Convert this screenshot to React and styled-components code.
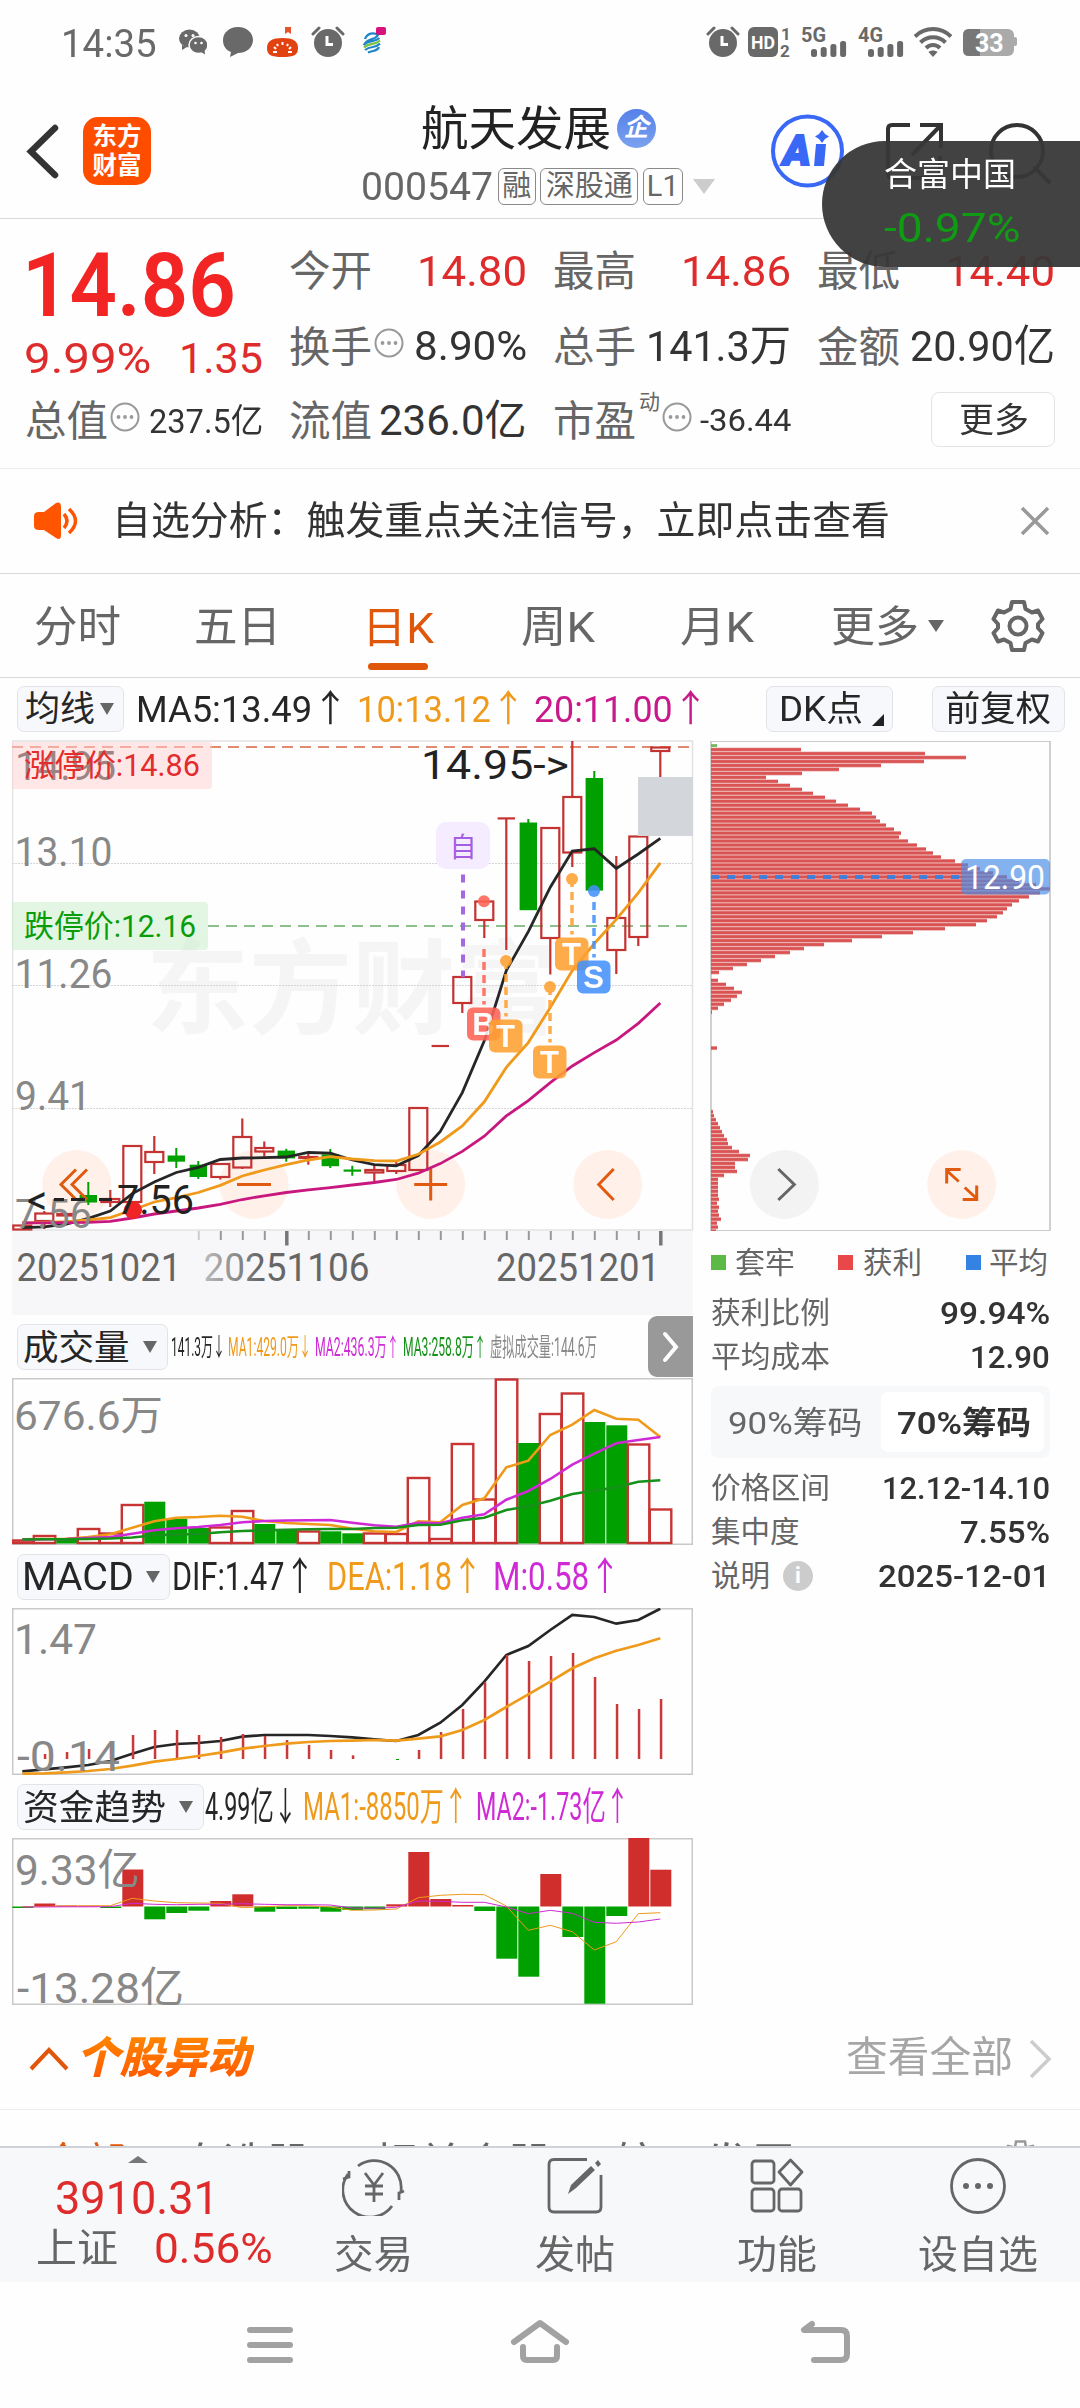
import { useLayoutEffect, useRef, useState } from 'react';
import styled, { createGlobalStyle } from 'styled-components';

const RED = '#de2b2b';
const GREEN = '#00a000';
const ORANGE = '#ef9a1a';
const BRAND = '#e0560a';
const PURPLE = '#cf2ad6';
const FONT = "Roboto, 'Noto Sans CJK SC', sans-serif";

const GlobalStyle = createGlobalStyle`
  * {
    box-sizing: border-box;
  }

  body {
    margin: 0;
    background: #fefefe;
    font-family: ${FONT};
    color: #333;
  }

  svg {
    display: block;
    flex: none;
  }
`;

/* ---------- text that always takes the same width ---------- */

const FitBox = styled.span`
  display: block;
  flex: none;
  width: ${(p) => p.$w}px;
  margin-left: ${(p) => p.$ml || 0}px;
  padding-top: ${(p) => p.$drop ?? 2.5}px;
  font-size: ${(p) => p.$size}px;
  line-height: 1.25;
  font-weight: ${(p) => p.$weight || 400};
  color: ${(p) => p.$color || 'inherit'};
  white-space: nowrap;

  span {
    display: inline-block;
    transform-origin: left center;
  }
`;

const Fit = ({ w, size, color, weight, ml, drop, children }) => {
  const ref = useRef(null);
  const [scale, setScale] = useState(1);

  useLayoutEffect(() => {
    setScale(w / ref.current.offsetWidth);
  }, [w]);

  return (
    <FitBox $w={w} $size={size} $color={color} $weight={weight} $ml={ml} $drop={drop}>
      <span ref={ref} style={{ transform: `scaleX(${scale})` }}>
        {children}
      </span>
    </FitBox>
  );
};

/* ---------- shared bits ---------- */

const Page = styled.main`
  width: 1080px;
  height: 2408px;
  overflow: hidden;
  display: flex;
  flex-direction: column;
  position: relative;
`;

const Row = styled.div`
  display: flex;
  align-items: center;
  flex: none;
  height: ${(p) => (p.$h ? `${p.$h}px` : 'auto')};
`;

const Spacer = styled.div`
  flex: none;
  width: ${(p) => p.$w}px;
`;

const DropButton = styled.button`
  display: flex;
  align-items: center;
  flex: none;
  width: ${(p) => p.$w}px;
  height: 46px;
  padding: 0 0 0 ${(p) => p.$pad || 5}px;
  margin: 0;
  border: 1.5px solid #e2e4ea;
  border-radius: 7px;
  background: #f7f8fb;
  color: #262626;
  font-family: inherit;
  text-align: left;
`;

const Caret = styled.i`
  flex: none;
  margin-left: ${(p) => p.$ml || 0}px;
  border-left: ${(p) => p.$s || 7}px solid transparent;
  border-right: ${(p) => p.$s || 7}px solid transparent;
  border-top: ${(p) => p.$h || 12}px solid ${(p) => p.$color || '#666'};
`;

const DotsIcon = styled.svg`
  margin: -6px 0 0 2px;
`;

const MoreDots = () => (
  <DotsIcon width="30" height="30" viewBox="0 0 30 30">
    <circle cx="15" cy="15" r="13.5" fill="none" stroke="#999" strokeWidth="2" />
    <circle cx="8.5" cy="15" r="1.9" fill="#999" />
    <circle cx="15" cy="15" r="1.9" fill="#999" />
    <circle cx="21.5" cy="15" r="1.9" fill="#999" />
  </DotsIcon>
);

/* ---------- status bar ---------- */

const StatusBar = styled(Row)`
  height: 88px;
  padding: 0 0 4px 61px;
  color: #696969;
`;

const AlarmIcon = () => (
  <svg width="34" height="32" viewBox="0 0 34 32">
    <circle cx="17" cy="17" r="14" fill="#696969" />
    <path d="M2 8 L8 2 M32 8 L26 2" stroke="#696969" strokeWidth="3" strokeLinecap="round" />
    <path d="M16 10 V18.5 H22" fill="none" stroke="#fff" strokeWidth="3" />
  </svg>
);

const Signal = ({ label }) => (
  <svg width="48" height="32" viewBox="0 0 48 32">
    <text x="0" y="16" fontSize="21" fontWeight="700" fill="#696969" textLength="25" lengthAdjust="spacingAndGlyphs">
      {label}
    </text>
    {[8, 10, 13, 16].map((h, i) => (
      <rect key={h} x={10 + i * 9.7} y={31 - h} width="6" height={h} rx="2.5" fill="#696969" />
    ))}
  </svg>
);

const Status = () => (
  <StatusBar>
    <Fit w={96} size={38} drop={5}>
      14:35
    </Fit>
    <Spacer $w={22} />
    <svg width="28" height="26" viewBox="0 0 28 26">
      <ellipse cx="10.5" cy="9.5" rx="10.5" ry="9" fill="#696969" />
      <path d="M3 16 L3 21 L8 18 Z" fill="#696969" />
      <ellipse cx="19.5" cy="16" rx="9.5" ry="8.5" fill="#696969" stroke="#fefefe" strokeWidth="1.5" />
      <path d="M22 23 L26 25.5 L25.5 20 Z" fill="#696969" />
      <circle cx="7" cy="6.5" r="1.5" fill="#fff" />
      <circle cx="14" cy="6.5" r="1.5" fill="#fff" />
      <circle cx="16.5" cy="14" r="1.3" fill="#fff" />
      <circle cx="22.5" cy="14" r="1.3" fill="#fff" />
    </svg>
    <Spacer $w={15} />
    <svg width="32" height="32" viewBox="0 0 32 32">
      <path d="M16 1 C25 1 31 7 31 14 C31 21 25 27 16 27 L8 31 L9 26 C4 24 1 20 1 14 C1 7 7 1 16 1 Z" fill="#696969" />
    </svg>
    <Spacer $w={13} />
    <svg width="31" height="32" viewBox="0 0 31 32">
      <path d="M18 1 H24 V8 L21 6 L18 8 Z" fill="#e8542a" />
      <path d="M0 22 C0 15 5 12 15.5 12 C26 12 31 15 31 22 C31 29 27 31 15.5 31 C4 31 0 29 0 22 Z" fill="#e2420f" />
      <path
        d="M15.5 16 V19 M10 18 L11 20 M21 18 L20 20 M7 21 L9 23 M24 21 L22 23 M6 26 H10 M25 26 H21"
        stroke="#fff"
        strokeWidth="2"
      />
    </svg>
    <Spacer $w={13} />
    <AlarmIcon />
    <Spacer $w={17} />
    <svg width="26" height="32" viewBox="0 0 26 32">
      <g fill="none" strokeWidth="2.2">
        <path d="M3 13 C5 7 12 6 16 9 C13 14 8 12 3 17" stroke="#1f86c8" />
        <path d="M1.5 19 C7 13 12 17 17.5 12" stroke="#1f86c8" />
        <path d="M2 21.5 C8 15.500 12 20 18 14.500" stroke="#7ac143" />
        <path d="M3 24 C9 19 13 23 18 17.5 M6 26.500 C11 24 15 26 17 21" stroke="#1f86c8" />
      </g>
      <rect x="14" y="1" width="10" height="8" rx="2" fill="#d6127c" />
    </svg>
    <Spacer $w={318} />
    <AlarmIcon />
    <Spacer $w={8} />
    <svg width="44" height="32" viewBox="0 0 44 32">
      <rect x="0" y="1" width="30" height="30" rx="6" fill="#696969" />
      <text x="3" y="23" fontSize="19" fontWeight="700" fill="#fff" textLength="24" lengthAdjust="spacingAndGlyphs">
        HD
      </text>
      <text x="33" y="14" fontSize="17" fontWeight="700" fill="#696969">
        1
      </text>
      <text x="32" y="31" fontSize="17" fontWeight="700" fill="#696969">
        2
      </text>
    </svg>
    <Spacer $w={9} />
    <Signal label="5G" />
    <Spacer $w={9} />
    <Signal label="4G" />
    <Spacer $w={8} />
    <svg width="38" height="32" viewBox="0 0 38 32" fill="none" stroke="#696969" strokeWidth="4">
      <path d="M1 10.5 C11 0.5 27 0.5 37 10.5" />
      <path d="M6.5 16.5 C13.5 9.5 24.5 9.5 31.5 16.5" />
      <path d="M12 22 C16 18 22 18 26 22" />
      <path d="M14.5 26 L19 31 L23.5 26 C21 24 17 24 14.5 26 Z" fill="#696969" stroke="none" />
    </svg>
    <Spacer $w={11} />
    <svg width="55" height="30" viewBox="0 0 55 30">
      <rect x="50" y="10" width="4" height="9" rx="2" fill="#aaa" />
      <rect x="0" y="2" width="51" height="27" rx="6" fill="#aaa" />
      <path d="M17 2 H6 Q0 2 0 8 V23 Q0 29 6 29 H17 Z" fill="#777" />
      <text x="12" y="24.5" fontSize="25" fontWeight="700" fill="#fff">
        33
      </text>
    </svg>
  </StatusBar>
);

/* ---------- header ---------- */

const HeaderBar = styled.header`
  display: flex;
  flex: none;
  height: 131px;
  border-bottom: 1.5px solid #d8d8d8;
`;

const HeaderSide = styled.div`
  display: flex;
  align-items: flex-start;
  flex: none;
  width: ${(p) => p.$w}px;
  padding: ${(p) => p.$pad};
`;

const Logo = styled.div`
  width: 68px;
  height: 68px;
  margin: 0 0 0 22px;
  padding-top: 5px;
  border-radius: 15px;
  background: #ff4d00;
  color: #fff;
  font-size: 24.5px;
  line-height: 29px;
  font-weight: 700;
  text-align: center;
`;

const TitleBlock = styled.div`
  display: flex;
  flex-direction: column;
  align-items: center;
  flex: none;
  width: 354px;
  padding-top: 12px;
`;

const Company = styled.span`
  width: 39px;
  height: 39px;
  margin-left: 6px;
  border-radius: 50%;
  background: linear-gradient(#5580e8, #7ba2f0);
  color: #fff;
  font-size: 25px;
  line-height: 38px;
  font-weight: 700;
  font-style: italic;
  text-align: center;
`;

const Tag = styled.span`
  width: ${(p) => p.$w}px;
  height: 37px;
  margin-left: 4.5px;
  border: 1.5px solid #8a8a8a;
  border-radius: 6px;
  color: #666;
  font-size: 29px;
  line-height: 35px;
  text-align: center;
  white-space: nowrap;
`;

const CodeRow = styled(Row)`
  height: 58px;
  padding-top: 3px;
`;

const Header = () => (
  <HeaderBar>
    <HeaderSide $w={361} $pad="29px 0 0 25px">
      <svg width="36" height="68" viewBox="0 0 36 68">
        <path d="M30 11 L6 34.5 L30 58" fill="none" stroke="#333" strokeWidth="6.5" strokeLinecap="round" />
      </svg>
      <Logo>
        东方
        <br />
        财富
      </Logo>
    </HeaderSide>
    <TitleBlock>
      <Row $h={56}>
        <Fit w={190} size={47} color="#222">
          航天发展
        </Fit>
        <Company>企</Company>
      </Row>
      <CodeRow>
        <Fit w={132} size={38} color="#666">
          000547
        </Fit>
        <Tag $w={38}>融</Tag>
        <Tag $w={98}>深股通</Tag>
        <Tag $w={40}>L1</Tag>
        <Caret $ml={10} $s={11} $h={15} $color="#ccc" />
      </CodeRow>
    </TitleBlock>
    <HeaderSide $w={365} $pad="25px 0 0 54px">
      <svg width="78" height="78" viewBox="0 0 78 78">
        <circle cx="38.5" cy="38" r="34.5" fill="none" stroke="#3968f6" strokeWidth="4" />
        <text x="14" y="52" fontSize="42" fontWeight="900" fontStyle="italic" fill="#3968f6" stroke="#3968f6" strokeWidth="2">
          A
        </text>
        <path d="M47 31 L57 31 L55 53 L45 53 Z M53 17 L56 21 L60 23.5 L56 26 L53 30 L50 26 L46 23.5 L50 21 Z" fill="#3968f6" />
      </svg>
      <Spacer $w={35} />
      <svg width="70" height="78" viewBox="0 0 70 78" fill="none" stroke="#333" strokeWidth="4">
        <path d="M28 12 H10 Q6 12 6 16 V61 Q6 65 10 65 H54 Q58 65 58 61 V43" />
        <path d="M38 12 H59 V35 M59 12 L30 42" />
      </svg>
      <Spacer $w={34} />
      <svg width="76" height="78" viewBox="0 0 76 78" fill="none" stroke="#333" strokeWidth="4">
        <circle cx="31" cy="38" r="26" />
        <path d="M49 55 L63 69" strokeLinecap="round" />
      </svg>
    </HeaderSide>
  </HeaderBar>
);

/* floating pill over the header and the quote */
const FloatPill = styled.aside`
  position: absolute;
  top: 141px;
  right: 0;
  width: 258px;
  height: 126px;
  padding: 12px 0 0 62px;
  border-radius: 63px 0 0 63px;
  background: rgba(56, 56, 56, 0.95);
`;

const PillLine = styled.div`
  display: flex;
  align-items: center;
  height: ${(p) => p.$h}px;
`;

/* ---------- quote ---------- */

const QuoteGrid = styled.section`
  display: grid;
  flex: none;
  grid-template-columns: repeat(4, 238px);
  grid-template-rows: 79px 72px 98px;
  column-gap: 26px;
  height: 250px;
  padding: 12px 0 0 25px;
  border-bottom: 1.5px solid #ebebeb;
`;

const PriceCell = styled.div`
  grid-row: 1 / 3;
  padding-top: 1px;
`;

const Cell = styled.div`
  display: flex;
  align-items: center;
  justify-content: space-between;
  padding-bottom: ${(p) => p.$pb || 0}px;
`;

const CellLabel = styled.div`
  display: flex;
  align-items: center;
  color: #666;
`;

const Super = styled.span`
  margin: -36px 0 0 3px;
  font-size: 21px;
  line-height: 24px;
`;

const MoreButton = styled.button`
  display: flex;
  align-items: center;
  justify-content: center;
  width: 124px;
  height: 55px;
  margin: 0 0 0 auto;
  border: 1.5px solid #e4e4e4;
  border-radius: 8px;
  background: #fff;
  color: #333;
  font-family: inherit;
`;

const QuoteCell = ({ label, value, w, size = 43, color = '#333', dots, sup, pb }) => (
  <Cell $pb={pb}>
    <CellLabel>
      <Fit w={83} size={41.5} drop={3}>
        {label}
      </Fit>
      {sup && <Super>{sup}</Super>}
      {dots && <MoreDots />}
    </CellLabel>
    <Fit w={w} size={size} color={color}>
      {value}
    </Fit>
  </Cell>
);

const Quote = () => (
  <QuoteGrid>
    <PriceCell>
      <Row $h={107}>
        <Fit w={214} size={89} color="#f22424" weight={600} ml={-3} drop={0}>
          14.86
        </Fit>
      </Row>
      <Row $h={38}>
        <Fit w={127} size={43} color={RED} ml={-1}>
          9.99%
        </Fit>
        <Fit w={84} size={43} color={RED} ml={28}>
          1.35
        </Fit>
      </Row>
    </PriceCell>
    <QuoteCell label="今开" value="14.80" w={110} color={RED} />
    <QuoteCell label="最高" value="14.86" w={110} color={RED} />
    <QuoteCell label="最低" value="14.40" w={110} color={RED} />
    <QuoteCell label="换手" value="8.90%" w={113} size={40} dots />
    <QuoteCell label="总手" value="141.3万" w={145} />
    <QuoteCell label="金额" value="20.90亿" w={145} />
    <QuoteCell label="总值" value="237.5亿" w={114} size={34} dots pb={22} />
    <QuoteCell label="流值" value="236.0亿" w={148} size={42} pb={22} />
    <QuoteCell label="市盈" sup="动" value="-36.44" w={91} size={31} dots pb={22} />
    <Cell $pb={24}>
      <MoreButton>
        <Fit w={70} size={34}>
          更多
        </Fit>
      </MoreButton>
    </Cell>
  </QuoteGrid>
);

/* ---------- notice ---------- */

const NoticeBar = styled(Row)`
  height: 105px;
  padding-left: 34px;
  border-bottom: 1.5px solid #d8d8d8;
`;

const Notice = () => (
  <NoticeBar>
    <svg width="46" height="40" viewBox="0 0 46 40">
      <path d="M0 15 Q0 11 5 11 H10 L22 2 Q27 0 27 6 V34 Q27 40 22 37 L10 29 H5 Q0 29 0 25 Z" fill="#ff5500" />
      <path d="M30 13 Q36 20 30 27 M35 8 Q48 20 35 32" fill="none" stroke="#ff5500" strokeWidth="3.5" />
    </svg>
    <Fit w={778} size={39} ml={31.5} drop={1}>
      自选分析：触发重点关注信号，立即点击查看
    </Fit>
    <Spacer $w={130} />
    <svg width="30" height="30" viewBox="0 0 30 30">
      <path d="M2 2 L28 28 M28 2 L2 28" stroke="#999" strokeWidth="3.5" />
    </svg>
  </NoticeBar>
);

/* ---------- period tabs ---------- */

const TabBar = styled.nav`
  display: flex;
  align-items: center;
  flex: none;
  height: 104px;
  border-bottom: 1.5px solid #d8d8d8;
`;

const Tab = styled.div`
  display: flex;
  flex-direction: column;
  align-items: center;
  justify-content: center;
  flex: none;
  height: 100px;
  margin-left: ${(p) => p.$ml}px;
  padding-top: ${(p) => (p.$active ? 9 : 0)}px;
  color: ${(p) => (p.$active ? BRAND : '#666')};

  &::after {
    content: '';
    display: ${(p) => (p.$active ? 'block' : 'none')};
    width: 60px;
    height: 7px;
    margin: 7px 0 -7px;
    border-radius: 4px;
    background: ${BRAND};
  }
`;

const tabs = [
  { name: '分时', w: 87, ml: 34 },
  { name: '五日', w: 87, ml: 73 },
  { name: '日K', w: 72, ml: 81, active: true },
  { name: '周K', w: 74, ml: 87 },
  { name: '月K', w: 74, ml: 85 },
  { name: '更多', w: 88, ml: 77 },
];

const Tabs = () => (
  <TabBar>
    {tabs.map((t) => (
      <Tab key={t.name} $ml={t.ml} $active={t.active}>
        <Fit w={t.w} size={43} drop={5}>
          {t.name}
        </Fit>
      </Tab>
    ))}
    <Caret $ml={9} $s={8} $h={12} />
    <Spacer $w={47} />
    <svg width="54" height="54" viewBox="0 0 54 54" fill="none" stroke="#666" strokeWidth="4">
      <path
        d="M21 3 H33 L34.5 10 L41 13.500 L47 11.500 L51.5 20 L47 25 V29 L51.5 34 L47 42.500 L41 40.500 L34.500 44 L33 51 H21 L19.500 44 L13 40.500 L7 42.500 L2.500 34 L7 29 V25 L2.500 20 L7 11.500 L13 13.500 L19.500 10 Z"
        strokeLinejoin="round"
      />
      <circle cx="27" cy="27" r="8.5" />
    </svg>
  </TabBar>
);

/* ---------- average line bar ---------- */

const LineBar = styled(Row)`
  height: 62px;
  padding: 0 0 0 17px;
`;

const Corner = styled.i`
  align-self: flex-end;
  margin: 0 0 5px 9px;
  border-left: 12px solid transparent;
  border-bottom: 12px solid #222;
`;

const Averages = () => (
  <LineBar>
    <DropButton $w={107} $pad={7}>
      <Fit w={70} size={35}>
        均线
      </Fit>
      <Caret $ml={5} />
    </DropButton>
    <Fit w={212} size={37} color="#262626" ml={12}>
      MA5:13.49↑
    </Fit>
    <Fit w={168} size={37} color={ORANGE} ml={9}>
      10:13.12↑
    </Fit>
    <Fit w={174} size={37} color="#c8188a" ml={9}>
      20:11.00↑
    </Fit>
    <Spacer $w={58} />
    <DropButton $w={127} $pad={12}>
      <Fit w={84} size={35}>
        DK点
      </Fit>
      <Corner />
    </DropButton>
    <Spacer $w={39} />
    <DropButton $w={133} $pad={12}>
      <Fit w={106} size={35}>
        前复权
      </Fit>
    </DropButton>
  </LineBar>
);

/* ---------- charts ---------- */

const PITCH = 22;
const cx = (i) => 22.3 + PITCH * i;
const toPoints = (ys) => ys.map((y, i) => `${cx(i)},${y}`).join(' ');

// [kind, bodyTop, bodyBottom, high, low]
const candles = [
  ['r', 1225.5, 1229.5, 1225, 1230],
  ['r', 1213.5, 1221, 1211, 1229],
  ['r', 1214, 1215.5, 1213, 1217],
  ['g', 1195, 1202.5, 1182, 1205],
  ['r', 1199, 1202, 1190, 1207],
  ['r', 1146, 1202, 1146, 1202],
  ['r', 1152, 1162, 1136, 1174],
  ['g', 1155.5, 1161.7, 1148, 1168],
  ['g', 1164.7, 1177, 1161, 1179],
  ['r', 1164, 1177, 1163, 1179.5],
  ['r', 1137, 1167.5, 1118.5, 1169],
  ['r', 1148, 1151.5, 1141.4, 1156.6],
  ['g', 1150.6, 1158.4, 1148.8, 1161.7],
  ['r', 1157, 1158, 1153, 1164.7],
  ['g', 1154.3, 1166.2, 1149, 1168],
  ['g', 1169.5, 1171.7, 1165.8, 1175.8],
  ['r', 1170, 1172.5, 1165, 1183],
  ['r', 1165, 1171, 1162, 1174],
  ['r', 1108, 1170, 1108, 1170],
  ['f', 1046, 1046, 1046, 1046],
  ['r', 977, 1003, 977, 1013],
  ['r', 901.5, 920, 901.5, 938],
  ['f', 818.4, 818.4, 818.4, 950],
  ['g', 822.5, 910.2, 819, 910],
  ['r', 828, 938, 828, 974.5],
  ['r', 797, 852.5, 741, 867],
  ['g', 778, 890.6, 771, 890],
  ['r', 918, 950, 856, 974],
  ['r', 836.5, 937, 836.5, 946],
  ['r', 747.5, 751, 747.5, 777],
];

const ma5 = [
  1227.6, 1226.9, 1224, 1218.3, 1211, 1193.6, 1182, 1172.5, 1167.3, 1159.5, 1158, 1157.7, 1157, 1152.5, 1153.2,
  1160, 1164.7, 1165.8, 1155.5, 1131.4, 1092.6, 1040.8, 970.5, 931.6, 887.2, 851, 848.8, 868.4, 854, 838.4,
];
const ma10 = [
  1223, 1222.4, 1221.7, 1220, 1217.6, 1210, 1202, 1197.6, 1192.5, 1185.4, 1176, 1170, 1164.7, 1160, 1156.6,
  1159, 1160.6, 1161, 1154.3, 1142, 1126, 1101.8, 1067.4, 1042.6, 1007.5, 970.5, 943.5, 919.4, 892.8, 862.8,
];
const ma20 = [
  1222.8, 1222.8, 1222.6, 1222.4, 1221.3, 1218, 1214, 1211, 1208, 1204.3, 1199.5, 1195.8, 1192.5, 1189.9, 1187.6,
  1185, 1182.5, 1179.5, 1173.2, 1163.6, 1151.4, 1136.2, 1115.9, 1100.7, 1082.6, 1066, 1052.6, 1040, 1023.4, 1003,
];

const Candle = ({ i, data }) => {
  const [kind, top, bottom, high, low] = data;
  const x = cx(i);
  if (kind === 'g') {
    return (
      <g fill={GREEN}>
        <rect x={x - 1} y={high} width="2" height={low - high} />
        <rect x={x - 8.7} y={top} width="17.4" height={bottom - top} />
      </g>
    );
  }
  return (
    <g fill="none" stroke="#c33331" strokeWidth="2.2">
      <path d={`M${x} ${high} V${top} M${x} ${bottom} V${low}`} />
      {kind === 'f' ? (
        <path d={`M${x - 8.7} ${top} H${x + 8.7}`} />
      ) : (
        <rect x={x - 9} y={top} width="18" height={bottom - top} />
      )}
    </g>
  );
};

const Marker = ({ x, y, top, from, letter, color }) => (
  <g opacity="0.88">
    <path d={`M${x} ${from} V${top - 3}`} stroke={color} strokeWidth="3.5" strokeDasharray="8 5" />
    <circle cx={x} cy={y} r="6" fill={color} />
    <rect x={x - 17} y={top} width="33.5" height="33" rx="6" fill={color} />
    <text
      x={x - 0.5}
      y={top + 27.5}
      fontSize="31"
      fontWeight="700"
      fill="#fff"
      textAnchor="middle"
      fontFamily="'Liberation Sans', sans-serif"
    >
      {letter}
    </text>
  </g>
);

const Label = ({ x, y, w, size = 40, color = '#888', children }) => (
  <text x={x} y={y} fontSize={size} fill={color} textLength={w} lengthAdjust="spacingAndGlyphs">
    {children}
  </text>
);

const Control = ({ x, d, bg = '#fff0e8', color = '#e05a10' }) => (
  <g>
    <circle cx={x} cy="1184.5" r="34.5" fill={bg} opacity="0.9" />
    <path transform={`translate(${x} 1184.5)`} d={d} fill="none" stroke={color} strokeWidth="3" />
  </g>
);

const KChart = () => (
  <svg width="682" height="491" viewBox="12 740 682 491">
    <text x="146" y="1026" fontSize="103" fontWeight="700" fill="#f5f5f5">
      东方财富
    </text>
    <rect x="12.5" y="741" width="680" height="489" fill="none" stroke="#e2e2e2" strokeWidth="1.5" />
    {[863.5, 985.5, 1108.5].map((y) => (
      <path key={y} d={`M12 ${y} H692`} stroke="#d5d5d5" strokeWidth="1" strokeDasharray="2 1" />
    ))}
    <path d="M12 747 H692" stroke="#e08a70" strokeWidth="1.8" strokeDasharray="11 7" />
    <path d="M208 926 H692" stroke="#8cc08c" strokeWidth="1.8" strokeDasharray="11 7" />
    <Control x={76.7} d="" />
    <Control x={254} d="M-17 0 H17" />
    <Control x={430.7} d="M-16.5 0 H16.5 M0 -16 V16" />
    <Control x={607.7} d="M6 -15.5 L-9 0 L6 15.5" />
    {candles.map((c, i) => (
      <Candle key={i} i={i} data={c} />
    ))}
    <rect x="638" y="777" width="55" height="59" fill="#d3d6da" />
    <path
      d="M76 1169.5 L61 1184.5 L76 1199.5 M87 1169.5 L72 1184.5 L87 1199.5"
      fill="none"
      stroke="#e05a10"
      strokeWidth="3"
    />
    <g fill="none" strokeWidth="2.8">
      <polyline points={toPoints(ma5)} stroke="#262626" />
      <polyline points={toPoints(ma10)} stroke={ORANGE} />
      <polyline points={toPoints(ma20)} stroke="#c8187f" />
    </g>
    <path d="M463 874.5 V977" stroke="#a865e6" strokeWidth="4" strokeDasharray="8 8" />
    <rect x="436" y="822" width="54" height="47" rx="10" fill="#f5ecff" />
    <text x="463" y="857" fontSize="27" fill="#a45ee2" textAnchor="middle">
      自
    </text>
    <Marker x={484} y={901.3} from={949} top={1007.5} letter="B" color="#ff6455" />
    <Marker x={506} y={961} from={961} top={1019.5} letter="T" color="#ffa032" />
    <Marker x={550} y={987} from={987} top={1045.5} letter="T" color="#ffa032" />
    <Marker x={572} y={879} from={879} top={937.5} letter="T" color="#ffa032" />
    <Marker x={594} y={891} from={902} top={960.5} letter="S" color="#4591fb" />
    <path d="M12 742 H208 Q212 742 212 746 V785 Q212 789 208 789 H12 Z" fill="#ffcfcf" opacity="0.5" />
    <path d="M12 902 H204 Q208 902 208 906 V946 Q208 950 204 950 H12 Z" fill="#c8edca" opacity="0.5" />
    <Label x={15} y={780} w={101} color="#9d8484">14.95</Label>
    <Label x={14.5} y={866} w={98}>13.10</Label>
    <Label x={14.5} y={987.5} w={98}>11.26</Label>
    <Label x={15} y={1110} w={76}>9.41</Label>
    <Label x={15} y={1228} w={77}>7.56</Label>
    <Label x={24} y={776} w={176} size={31} color="#e32c2c">涨停价:14.86</Label>
    <Label x={24} y={937} w={172} size={31} color="#0a9d0a">跌停价:12.16</Label>
    <circle cx="133" cy="1210" r="9" fill="#f02424" />
    <text x="27" y="1214" fontSize="40" fill="#222">
      &lt;
    </text>
    <path d="M54 1199.5 H64 M71 1199.5 H85 M99 1199.5 H112" stroke="#222" strokeWidth="2.8" />
    <Label x={117} y={1214} w={77} color="#222">7.56</Label>
    <Label x={421} y={778.5} w={148} size={41} color="#222">{'14.95->'}</Label>
  </svg>
);

const TimeAxis = () => (
  <svg width="682" height="84" viewBox="12 1231 682 84">
    <defs>
      <linearGradient id="fade" x1="0" x2="1">
        <stop offset="0" stopColor="#bbb" />
        <stop offset="0.35" stopColor="#666" />
      </linearGradient>
    </defs>
    <rect x="12" y="1231" width="681" height="84" fill="#f7f7fa" />
    {Array.from({ length: 22 }, (_, k) => k + 8).map((i) => {
      const major = i === 12 || i === 29;
      return (
        <path
          key={i}
          d={`M${cx(i) + 0.5} 1231 V${major ? 1245.5 : 1240}`}
          stroke={major ? '#777' : i === 8 ? '#ccc' : '#999'}
          strokeWidth={major ? 3.5 : 2}
        />
      );
    })}
    <Label x={16.5} y={1280.5} w={165} size={38} color="#666">20251021</Label>
    <Label x={203.5} y={1280.5} w={166} size={38} color="url(#fade)">20251106</Label>
    <Label x={496} y={1280.5} w={164} size={38} color="#666">20251201</Label>
  </svg>
);

const volumes = [
  ['r', 1540.5], ['r', 1536], ['g', 1538], ['r', 1529], ['r', 1533.5], ['r', 1505], ['g', 1501.7], ['g', 1518.7],
  ['g', 1528], ['r', 1527.5], ['r', 1511], ['g', 1524], ['g', 1529.3], ['r', 1531.5], ['g', 1531.3], ['g', 1533.3],
  ['r', 1533.5], ['r', 1534], ['r', 1478], ['r', 1539], ['r', 1444], ['r', 1499.5], ['r', 1379.5], ['g', 1443],
  ['r', 1414], ['r', 1393.5], ['g', 1422], ['g', 1425.3], ['r', 1444.5], ['r', 1509.5],
];
const volMa1 = [
  1539.3, 1539, 1538.7, 1537, 1534.3, 1527.7, 1521.3, 1517.7, 1517, 1515.7, 1516.7, 1521, 1523, 1524, 1525,
  1528.7, 1531.3, 1532, 1521.3, 1522.3, 1505, 1498.3, 1467.3, 1460.7, 1435, 1424.7, 1410, 1418.7, 1419.7, 1437,
];
const volMa2 = [
  1539.5, 1539.3, 1539, 1538, 1537, 1533.7, 1530.3, 1528.3, 1527, 1525, 1522.3, 1521, 1520.5, 1520.3, 1520,
  1522.7, 1525.3, 1526.7, 1522.7, 1523.3, 1517.7, 1514.3, 1499.7, 1491, 1479, 1464.7, 1453.7, 1443.3, 1440, 1437,
];
const volMa3 = [
  1539.5, 1539.3, 1539.2, 1539, 1538.5, 1537.5, 1535.3, 1534.4, 1534, 1532.3, 1531, 1530.4, 1529.7, 1529.3, 1529,
  1529, 1528, 1527.7, 1525, 1524.7, 1520.3, 1517.7, 1510, 1506.3, 1500.7, 1494, 1490.7, 1487.3, 1481.7, 1480.3,
];

const Frame = ({ y, h }) => (
  <rect x="12.75" y={y} width="679.5" height={h} fill="none" stroke="#c9c9c9" strokeWidth="1.5" />
);

const VolumeChart = () => (
  <svg width="682" height="167" viewBox="12 1378 682 167">
    <Frame y={1378.75} h={165.5} />
    {volumes.map(([kind, y], i) =>
      kind === 'g' ? (
        <rect key={i} x={cx(i) - 10} y={y} width="21" height={1543.5 - y} fill={GREEN} />
      ) : (
        <rect key={i} x={cx(i) - 10.5} y={y} width="21.5" height={1543 - y} fill="none" stroke="#c83434" strokeWidth="2.4" />
      )
    )}
    <g fill="none" strokeWidth="2.6">
      <polyline points={toPoints(volMa1)} stroke={ORANGE} />
      <polyline points={toPoints(volMa2)} stroke={PURPLE} />
      <polyline points={toPoints(volMa3)} stroke="#16911a" />
    </g>
    <Label x={14} y={1430} w={149} size={41}>676.6万</Label>
  </svg>
);

const macdTops = [
  1757, 1754, 1752, 1749, 1747, 1735, 1730, 1730, 1735, 1737, 1734, 1736, 1740, 1745, 1750,
  1755.3, 1759, 1759, 1750, 1732, 1709, 1682.3, 1655, 1661, 1656, 1653, 1677, 1704, 1709, 1699,
];
const dif = [
  1771.3, 1769.3, 1767.3, 1765, 1761, 1753.7, 1747, 1744, 1743, 1741, 1736.7, 1735, 1735, 1735, 1736,
  1737.3, 1739.3, 1741, 1735, 1722.7, 1705, 1681.7, 1655, 1646, 1630, 1615, 1617, 1623.7, 1620, 1608.7,
];
const dea = [
  1773.7, 1773.3, 1772.3, 1771, 1769, 1765.7, 1761.7, 1759, 1756, 1752.7, 1748.7, 1746, 1743.7, 1742, 1741,
  1740.7, 1740, 1740.7, 1738.7, 1736.3, 1730, 1720, 1707, 1694.3, 1681.7, 1668.3, 1658.3, 1650.7, 1645, 1638.3,
];

const MacdChart = () => (
  <svg width="682" height="167" viewBox="12 1608 682 167">
    <Frame y={1608.75} h={165.5} />
    <polyline points={toPoints(dif)} fill="none" stroke="#262626" strokeWidth="2.7" />
    {macdTops.map((y, i) => (
      <rect key={i} x={cx(i) - 0.5} y={y} width="2.5" height={1759 - y} fill="#c8393a" />
    ))}
    <rect x="396" y="1759" width="3" height="1" fill={GREEN} />
    <polyline points={toPoints(dea)} fill="none" stroke={ORANGE} strokeWidth="2.7" />
    <Label x={14} y={1654} w={83} size={42}>1.47</Label>
    <Label x={17} y={1771} w={103} size={42}>-0.14</Label>
  </svg>
);

const ZERO = 1906.5;
const flows = [
  1908, 1903.5, 1905.5, 1905.7, 1908, 1869.5, 1919.3, 1913, 1910.7, 1901, 1894.3, 1911.7, 1909, 1908.7, 1911.7,
  1910, 1909.3, 1904.3, 1852, 1899, 1905, 1911, 1958.7, 1976.7, 1874, 1937, 2003.7, 1916, 1838, 1869.7,
];
const flowMa1 = [
  1906.7, 1906.5, 1906, 1905.8, 1905.7, 1898.3, 1901, 1902.7, 1903, 1903.3, 1907.7, 1906.7, 1905.7, 1905.7, 1907,
  1910.3, 1910, 1909, 1897.7, 1895.3, 1894.3, 1894.7, 1906, 1930.3, 1925.3, 1931.7, 1950, 1941.7, 1913.7, 1912.7,
];
const flowMa2 = [
  1907, 1906.9, 1906.8, 1906.8, 1906.7, 1903.3, 1904.3, 1904.7, 1904.3, 1904.3, 1903.7, 1904.3, 1904.7, 1904.7, 1905,
  1908, 1908.3, 1907.3, 1901, 1901.3, 1902.3, 1902.3, 1907, 1913.7, 1910.3, 1913.3, 1922.3, 1923.3, 1922, 1919,
];

const FlowChart = () => (
  <svg width="682" height="167" viewBox="12 1838 682 167">
    <Frame y={1838.75} h={165.5} />
    {flows.map((y, i) => (
      <rect
        key={i}
        x={cx(i) - 10}
        y={Math.min(y, ZERO)}
        width="21"
        height={Math.abs(y - ZERO)}
        fill={y < ZERO ? '#d02d2d' : GREEN}
      />
    ))}
    <g fill="none" strokeWidth="1">
      <polyline points={toPoints(flowMa1)} stroke={ORANGE} />
      <polyline points={toPoints(flowMa2)} stroke={PURPLE} />
    </g>
    <Label x={15} y={1885} w={125} size={43}>9.33亿</Label>
    <Label x={17} y={2003} w={167} size={43}>-13.28亿</Label>
  </svg>
);

const SubBar = styled(Row)`
  height: 63px;
  padding: 0 0 0 5px;
`;

const Expand = styled.button`
  display: flex;
  align-items: center;
  justify-content: center;
  width: 45px;
  height: 61px;
  margin: 0 1px 0 auto;
  padding: 0;
  border: 0;
  border-radius: 9px 0 0 9px;
  background: #999;
`;

const Readings = ({ items, size }) =>
  items.map((it) => (
    <Fit key={it.text} w={it.w} ml={it.ml} size={size} color={it.color}>
      {it.text}
    </Fit>
  ));

const volumeItems = [
  { text: '141.3万↓', w: 54, ml: 3, color: '#262626' },
  { text: 'MA1:429.0万↓', w: 83, ml: 3, color: ORANGE },
  { text: 'MA2:436.3万↑', w: 84, ml: 4, color: PURPLE },
  { text: 'MA3:258.8万↑', w: 83, ml: 4, color: '#16911a' },
  { text: '虚拟成交量:144.6万', w: 107, ml: 4, color: '#888' },
];
const macdItems = [
  { text: 'DIF:1.47↑', w: 143, ml: 2, color: '#262626' },
  { text: 'DEA:1.18↑', w: 156, ml: 12, color: ORANGE },
  { text: 'M:0.58↑', w: 128, ml: 10, color: PURPLE },
];
const flowItems = [
  { text: '4.99亿↓', w: 92, ml: 1, color: '#262626' },
  { text: 'MA1:-8850万↑', w: 165, ml: 6, color: ORANGE },
  { text: 'MA2:-1.73亿↑', w: 153, ml: 8, color: PURPLE },
];

/* ---------- cost distribution ---------- */

const chips = [
  6, 90, 214, 255, 213, 170, 128, 91, 55, 67, 79, 91, 102, 114, 125, 137, 149, 161, 165, 169, 175, 183, 190, 188,
  197, 206, 215, 222, 230, 244, 257, 269, 282, 296, 308, 325, 339, 329, 318, 308, 301, 296, 292, 286, 276, 265, 234,
  202, 171, 141, 113, 93, 79, 64, 50, 36, 22, 8, 0, 7, 15, 23, 31, 26, 20, 13, 7, 1, 0, 0, 0, 0, 0, 0, 0, 0, 6,
  0, 0, 0, 0, 0, 0, 0, 0, 0, 0, 0, 0, 0, 0, 0, 2, 3, 5, 7, 9, 11, 13, 16, 17, 21, 28, 39, 37, 24, 24, 26, 13, 7, 7,
  7, 7, 7, 8, 6, 8, 7, 8, 10, 6, 7, 5,
];

const ChipChart = () => (
  <svg width="342" height="491" viewBox="710 740 342 491">
    <path d="M711 741.5 H1050 M711 1230.5 H1050" stroke="#ccc" strokeWidth="1" />
    <path d="M711 741 V1231 M1050 741 V1231" stroke="#ccc" strokeWidth="1.8" />
    {chips.map((w, i) => (
      <g key={i} fill={i === 0 ? '#6ab85a' : '#d95353'}>
        {i > 0 && <rect x="711" y={743.6 + i * 3.98} width={Math.min(w, 338)} height="4" opacity="0.5" />}
        <rect x="711" y={744.2 + i * 3.98} width={w} height="2.7" />
      </g>
    ))}
    <path d="M711 877 H961" stroke="#4080dc" strokeWidth="3.8" strokeDasharray="8 8" />
    <rect x="961" y="859" width="89" height="35.5" rx="5" fill="#4a8ee6" opacity="0.68" />
    <Label x={965} y={888.5} w={80} size={33} color="#fff">12.90</Label>
    <Control x={784.3} d="M-6 -15.5 L10 0 L-6 15.5" bg="#f2f2f2" color="#666" />
    <Control x={961.7} d="M-15 -1 V-15 H-1 M-15 -14 L-3 -3 M15 1 V15 H1 M15 14 L3 3" />
  </svg>
);

const Body = styled.section`
  display: flex;
  flex: none;
  height: 1265px;
`;

const Left = styled.div`
  flex: none;
  width: 710px;
  padding-left: 12px;
`;

const LeftInner = styled.div`
  width: 682px;
`;

const Right = styled.div`
  flex: none;
  width: 342px;
`;

const Legend = styled(Row)`
  height: 60px;
  padding: 3px 0 0 1px;
  color: #666;
`;

const Dot = styled.i`
  width: 15px;
  height: 15px;
  margin-left: ${(p) => p.$ml || 0}px;
  background: ${(p) => p.$color};
`;

const StatRow = styled(Row)`
  justify-content: space-between;
  height: 44px;
  padding-right: 2px;
  color: #666;
`;

const Switch = styled.div`
  display: flex;
  align-items: center;
  width: 339px;
  height: 72px;
  margin: 7px 0 8px 1px;
  padding: 6px;
  border-radius: 7px;
  background: #f7f8fa;
`;

const SwitchItem = styled.div`
  display: flex;
  align-items: center;
  flex: none;
  width: 163.5px;
  height: 60px;
  padding-left: ${(p) => (p.$active ? 16 : 11)}px;
  border-radius: 7px;
  background: ${(p) => (p.$active ? '#fff' : 'transparent')};
`;

const Info = styled.span`
  width: 30px;
  height: 30px;
  margin-left: 13px;
  border-radius: 50%;
  background: #ccc;
  color: #fff;
  font-size: 22px;
  line-height: 30px;
  font-weight: 700;
  text-align: center;
`;

const Stat = ({ label, lw, value, vw, info }) => (
  <StatRow>
    <Row>
      <Fit w={lw} size={29.5} ml={1} drop={0}>
        {label}
      </Fit>
      {info && <Info>i</Info>}
    </Row>
    <Fit w={vw} size={32} color="#333" weight={500} drop={0}>
      {value}
    </Fit>
  </StatRow>
);

const Charts = () => (
  <Body>
    <Left>
      <LeftInner>
        <KChart />
        <TimeAxis />
        <SubBar>
          <DropButton $w={151}>
            <Fit w={107} size={35.5}>
              成交量
            </Fit>
            <Caret $ml={13} />
          </DropButton>
          <Readings items={volumeItems} size={25} />
          <Expand>
            <svg width="18" height="32" viewBox="0 0 18 32">
              <path d="M3 3 L14 16 L3 29" fill="none" stroke="#fff" strokeWidth="4" strokeLinecap="round" />
            </svg>
          </Expand>
        </SubBar>
        <VolumeChart />
        <SubBar>
          <DropButton $w={153}>
            <Fit w={112} size={38} ml={-1}>
              MACD
            </Fit>
            <Caret $ml={12} />
          </DropButton>
          <Readings items={macdItems} size={39} />
        </SubBar>
        <MacdChart />
        <SubBar>
          <DropButton $w={187}>
            <Fit w={143} size={35.5}>
              资金趋势
            </Fit>
            <Caret $ml={13} />
          </DropButton>
          <Readings items={flowItems} size={39} />
        </SubBar>
        <FlowChart />
      </LeftInner>
    </Left>
    <Right>
      <ChipChart />
      <Legend>
        <Dot $color="#5cb946" />
        <Fit w={60} size={29.5} ml={9} drop={1}>
          套牢
        </Fit>
        <Dot $color="#e84848" $ml={43} />
        <Fit w={59} size={29.5} ml={10} drop={1}>
          获利
        </Fit>
        <Dot $color="#3482e4" $ml={44} />
        <Fit w={59} size={29.5} ml={8} drop={1}>
          平均
        </Fit>
      </Legend>
      <Stat label="获利比例" lw={119} value="99.94%" vw={110} />
      <Stat label="平均成本" lw={119} value="12.90" vw={80} />
      <Switch>
        <SwitchItem>
          <Fit w={134} size={32} color="#666" drop={1}>
            90%筹码
          </Fit>
        </SwitchItem>
        <SwitchItem $active>
          <Fit w={134} size={32} color="#333" weight={600} drop={1}>
            70%筹码
          </Fit>
        </SwitchItem>
      </Switch>
      <Stat label="价格区间" lw={119} value="12.12-14.10" vw={168} />
      <Stat label="集中度" lw={89} value="7.55%" vw={90} />
      <Stat label="说明" lw={59} value="2025-12-01" vw={172} info />
    </Right>
  </Body>
);

/* ---------- movements ---------- */

const MoveBar = styled(Row)`
  height: 105px;
  padding: 3px 0 0 29px;
  border-bottom: 1.5px solid #ededed;
`;

const MoveTitle = styled.h2`
  width: 178px;
  margin: 0 0 0 7px;
  font-size: 43.5px;
  line-height: 54px;
  font-weight: 900;
  font-style: italic;
  white-space: nowrap;
  background: linear-gradient(#ff8a00, #ff5200);
  background-clip: text;
  -webkit-background-clip: text;
  color: transparent;
`;

const MoveArrow = styled.svg`
  margin-left: 16px;
`;

const Filters = styled(Row)`
  height: 36px;
  padding: 28px 0 0 42px;
  align-items: flex-start;
  overflow: hidden;
  color: #666;
`;

const FilterGear = styled.svg`
  margin: 2px 0 0 207px;
`;

const Movements = () => (
  <>
    <MoveBar>
      <svg width="40" height="30" viewBox="0 0 40 30">
        <path d="M2 25 L20 6 L38 25" fill="none" stroke={BRAND} strokeWidth="4" />
      </svg>
      <MoveTitle>个股异动</MoveTitle>
      <Fit w={167} size={42} color="#a6a6a6" ml={592} drop={0}>
        查看全部
      </Fit>
      <MoveArrow width="24" height="40" viewBox="0 0 24 40">
        <path d="M2 2 L20 20 L2 38" fill="none" stroke="#ccc" strokeWidth="3.5" />
      </MoveArrow>
    </MoveBar>
    <Filters>
      <Fit w={84} size={41} color={BRAND} drop={0}>
        全部
      </Fit>
      <Fit w={132} size={41} ml={53} drop={0}>
        自选股
      </Fit>
      <Fit w={180} size={41} ml={62} drop={0}>
        相关个股
      </Fit>
      <Fit w={184} size={41} ml={59} drop={0}>
        航天发展
      </Fit>
      <FilterGear width="36" height="34" viewBox="0 0 36 34">
        <path
          d="M2 10 L5 6 L12 7.500 L13 1.500 H22 L23 7.500 L30 6 L33 10 L29 16 L33 23 L28 27 L22 26 L21 32 H13 L12 26 L6 27 L2 23 L6 16 Z"
          fill="none"
          stroke="#999"
          strokeWidth="2.5"
        />
      </FilterGear>
    </Filters>
  </>
);

/* ---------- bottom bars ---------- */

const BottomBar = styled.footer`
  display: flex;
  flex: none;
  height: 136px;
  border-top: 2px solid #cfd2d9;
  background: #f7f8fa;
`;

const IndexBox = styled.div`
  flex: none;
  width: 273px;
`;

const UpMark = styled.i`
  display: block;
  width: 0;
  margin: 8px 0 0 128px;
  border-left: 10px solid transparent;
  border-right: 10px solid transparent;
  border-bottom: 7px solid #777;
`;

const Action = styled.div`
  display: flex;
  flex-direction: column;
  align-items: center;
  flex: none;
  width: 201.5px;
  padding-top: 8px;
  color: #666;
`;

const ActionIcon = ({ children }) => (
  <svg width="64" height="60" viewBox="0 0 64 60" fill="none" stroke="#666" strokeWidth="2.8">
    {children}
  </svg>
);

const ActionText = styled.div`
  height: 60px;
  padding-top: 12px;
`;

const Bottom = () => (
  <BottomBar>
    <IndexBox>
      <UpMark />
      <Row $h={68}>
        <Fit w={164} size={47} color={RED} ml={55}>
          3910.31
        </Fit>
      </Row>
      <Row $h={34}>
        <Fit w={82} size={40} color="#666" ml={36}>
          上证
        </Fit>
        <Fit w={119} size={42} color={RED} ml={36}>
          0.56%
        </Fit>
      </Row>
    </IndexBox>
    <Action>
      <ActionIcon>
        <path d="M16 10 A27 27 0 0 1 59 35 M50 50 A27 27 0 0 1 6 18" />
        <path d="M57 44 V37 L62 35 M7 15 V21 L1 23" />
        <path d="M23 17 L32 29 L41 17 M32 29 V46 M23 30 H41 M23 38 H41" />
      </ActionIcon>
      <ActionText>
        <Fit w={79} size={39}>
          交易
        </Fit>
      </ActionText>
    </Action>
    <Action>
      <ActionIcon>
        <path d="M44 3.5 H11 Q6 3.5 6 9 V51 Q6 56 11 56 H53 Q58 56 58 51 V19" />
        <path d="M25 38 L28 29 L48 10 L52 14 L33 32 Z M52 7 L55 4 L58 8 L55 11 Z" fill="#666" stroke="none" />
      </ActionIcon>
      <ActionText>
        <Fit w={80} size={39}>
          发帖
        </Fit>
      </ActionText>
    </Action>
    <Action>
      <ActionIcon>
        <rect x="7" y="5" width="22" height="22" rx="3" />
        <rect x="7" y="33" width="22" height="22" rx="3" />
        <rect x="34" y="33" width="22" height="22" rx="3" />
        <path d="M45.5 4 L57 16 L45.5 29 L34 16 Z" strokeLinejoin="round" />
      </ActionIcon>
      <ActionText>
        <Fit w={80} size={39}>
          功能
        </Fit>
      </ActionText>
    </Action>
    <Action>
      <ActionIcon>
        <circle cx="32" cy="30" r="26.5" />
        <g fill="#666" stroke="none">
          <circle cx="20" cy="30" r="3" />
          <circle cx="32" cy="30" r="3" />
          <circle cx="44" cy="30" r="3" />
        </g>
      </ActionIcon>
      <ActionText>
        <Fit w={120} size={39}>
          设自选
        </Fit>
      </ActionText>
    </Action>
  </BottomBar>
);

const SystemNav = styled.nav`
  display: flex;
  flex: none;
  height: 126px;
  padding: 34px 0 0 241px;
`;

const NavIcon = ({ d }) => (
  <svg width="60" height="54" viewBox="0 0 60 54">
    <path d={d} fill="none" stroke="#a2a2a2" strokeWidth="6" strokeLinecap="round" strokeLinejoin="round" />
  </svg>
);

const App = () => (
  <Page>
    <GlobalStyle />
    <Status />
    <Header />
    <Quote />
    <Notice />
    <Tabs />
    <Averages />
    <Charts />
    <Movements />
    <Bottom />
    <SystemNav>
      <NavIcon d="M9 14 H49 M9 29 H49 M9 44 H49" />
      <Spacer $w={209} />
      <NavIcon d="M4 26 L30 7 L56 26 M13 31 V40 Q13 44 17 44 H43 Q47 44 47 40 V31" />
      <Spacer $w={228} />
      <NavIcon d="M14 8 L6 14 H43 Q49 14 49 20 V38 Q49 44 43 44 H16" />
    </SystemNav>
    <FloatPill>
      <PillLine $h={43}>
        <Fit w={132} size={32.5} color="#fff">
          合富中国
        </Fit>
      </PillLine>
      <PillLine $h={62}>
        <Fit w={136} size={40} color="#109b14" drop={4}>
          -0.97%
        </Fit>
      </PillLine>
    </FloatPill>
  </Page>
);

export default App;
